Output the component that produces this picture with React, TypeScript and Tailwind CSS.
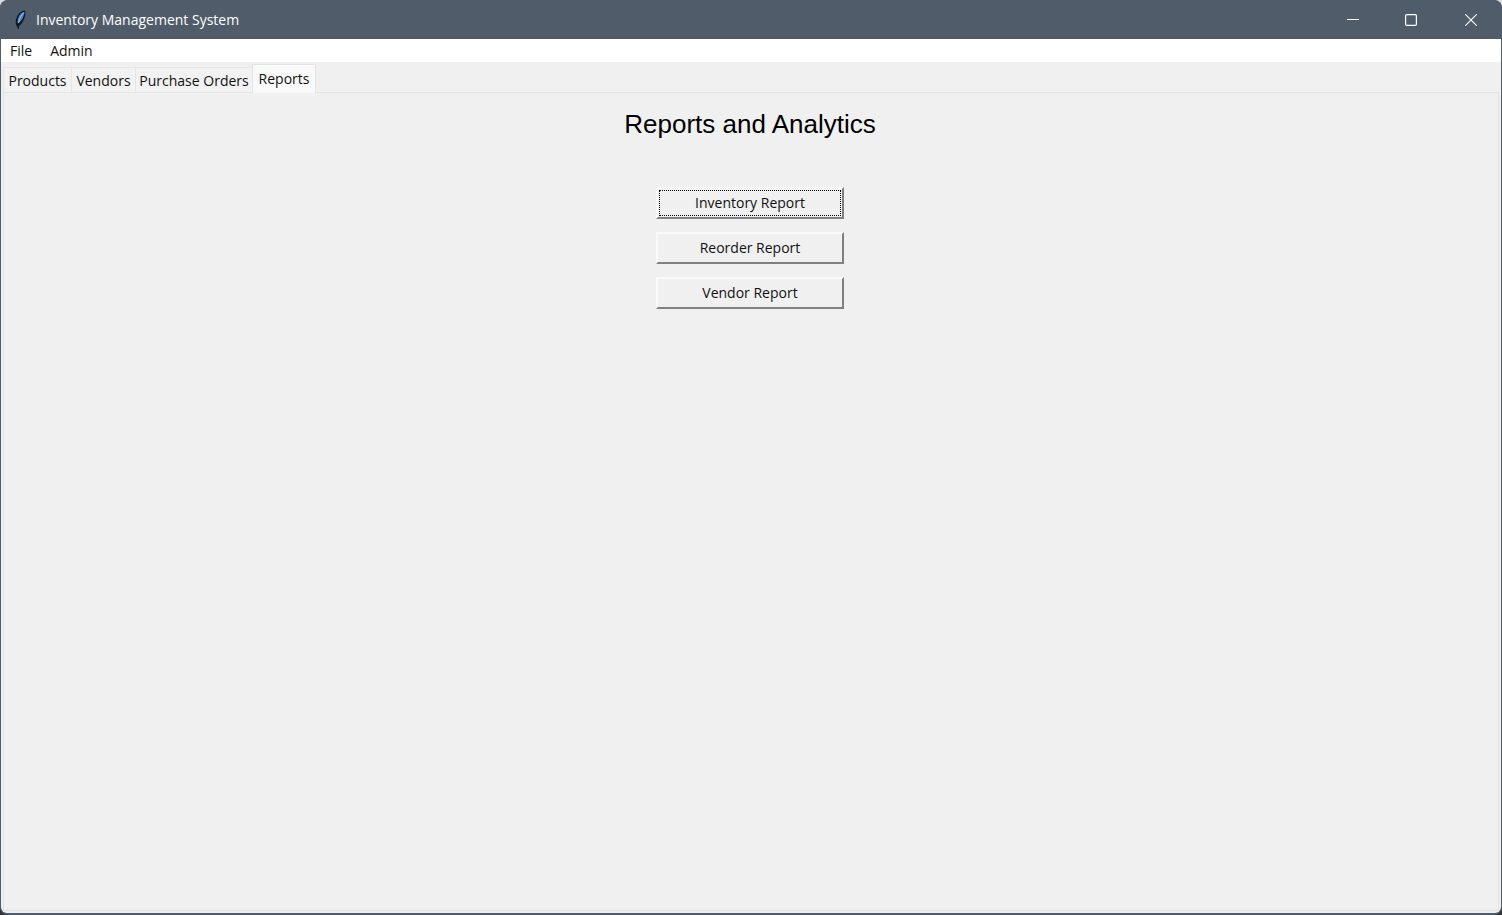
import { useState } from "react";

const menus = ["File", "Admin"];
const tabs = [
  { name: "Products", size: "w-[68px]" },
  { name: "Vendors", size: "w-16" },
  { name: "Purchase Orders", size: "w-[117px]" },
  { name: "Reports", size: "w-16" },
];
const reports = ["Inventory Report", "Reorder Report", "Vendor Report"];

function Feather() {
  return (
    <svg width="16" height="20" viewBox="0 0 16 20" aria-hidden="true">
      <path
        d="M13 0.6C9.6 0.8 6.4 3.2 4.8 7.2C3.6 10.2 3.2 13.2 4.4 15.4L6.4 18.8L7.2 16C9.8 14 11.6 10.6 12.6 7.4C13.4 4.8 13.8 2.4 13 0.6Z"
        fill="#14171c"
      />
      <path
        d="M12.4 1.8C9.4 2.4 6.9 5.4 5.9 9.2C5.5 11 5.5 12.6 6 13.6C8.6 11.8 10.4 9.4 11.4 6.6C12.1 4.8 12.6 3.2 12.4 1.8Z"
        fill="#4583cf"
      />
      <path d="M11.4 2.8C9 5.4 7.2 9 6.4 13.6" fill="none" stroke="#a8c8ec" strokeWidth="0.9" />
      <path d="M6.3 13V19" stroke="#14171c" strokeWidth="1" />
    </svg>
  );
}

function TitleBar() {
  return (
    <header className="flex h-[39px] shrink-0 items-center bg-[#515c6b] pl-3 text-white">
      <Feather />
      <h1 className="ml-2 grow text-sm">Inventory Management System</h1>
      <button aria-label="Minimize" className="grid h-full w-[58px] place-items-center">
        <svg width="12" height="12" viewBox="0 0 12 12" stroke="currentColor" aria-hidden="true">
          <path d="M0 5.5H12" />
        </svg>
      </button>
      <button aria-label="Maximize" className="grid h-full w-[58px] place-items-center">
        <svg width="12" height="12" viewBox="0 0 12 12" fill="none" stroke="currentColor" aria-hidden="true">
          <rect x="0.6" y="0.6" width="10.8" height="10.8" rx="1.2" strokeWidth="1.2" />
        </svg>
      </button>
      <button aria-label="Close" className="grid h-full w-[62px] place-items-center">
        <svg width="12" height="12" viewBox="0 0 12 12" stroke="currentColor" strokeWidth="1.1" aria-hidden="true">
          <path d="M0.3 0.3L11.7 11.7M11.7 0.3L0.3 11.7" />
        </svg>
      </button>
    </header>
  );
}

export default function App() {
  const [active, setActive] = useState("Reports");
  return (
    <div className="flex min-h-screen bg-[linear-gradient(#dcdcdc_50%,#303238_50%)] font-['Open_Sans',sans-serif] text-sm text-[#111111]">
      <div className="flex grow flex-col overflow-hidden rounded-lg bg-[#515c6b]">
        <TitleBar />
        <div className="mx-px mb-[2px] flex grow flex-col overflow-hidden rounded-b-md bg-[#f0f0f0]">
          <nav className="flex h-[23px] shrink-0 items-center bg-white">
            {menus.map((menu) => (
              <button key={menu} className="h-full px-[9px] leading-5">
                {menu}
              </button>
            ))}
          </nav>
          <div role="tablist" className="flex h-[31px] shrink-0 items-end px-[2px]">
            {tabs.map(({ name, size }) => (
              <button
                key={name}
                role="tab"
                aria-selected={active === name}
                onClick={() => setActive(name)}
                className={
                  active === name
                    ? `${size} z-10 flex h-[29px] items-center justify-center border border-b-0 border-[#e4e4e4] bg-[#f9f9f9] whitespace-nowrap`
                    : `${size} flex h-[26px] items-center justify-center border border-r-0 border-b-0 border-[#e6e6e6] bg-[#f2f2f2] whitespace-nowrap`
                }
              >
                {name}
              </button>
            ))}
          </div>
          <main
            role="tabpanel"
            className="mx-[2px] -mt-px mb-[2px] flex grow flex-col items-center border border-[#e4e4e4] pt-[11px] pr-[2px]"
          >
            <h2 className="font-['Liberation_Sans',sans-serif] text-[26px] leading-10 text-black">
              Reports and Analytics
            </h2>
            <div className="mt-[43px] flex flex-col gap-[13px]">
              {reports.map((report, index) => (
                <button
                  key={report}
                  className="h-8 w-[188px] border-2 border-t-[#fafafa] border-r-[#808080] border-b-[#808080] border-l-[#fafafa] p-px"
                >
                  <span
                    className={
                      index === 0
                        ? "flex h-full items-center justify-center border border-dotted border-black"
                        : "flex h-full items-center justify-center border border-transparent"
                    }
                  >
                    {report}
                  </span>
                </button>
              ))}
            </div>
          </main>
        </div>
      </div>
    </div>
  );
}
